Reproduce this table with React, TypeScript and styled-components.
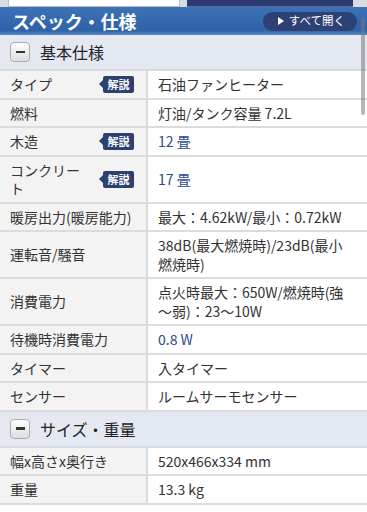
import React from "react";
import styled, { createGlobalStyle } from "styled-components";

const Global = createGlobalStyle`
  html, body { margin: 0; padding: 0; background: #fff; }
  body { font-family: "Noto Sans CJK JP", "Noto Sans", sans-serif; color: #333; }
  * { box-sizing: border-box; }
`;

const Page = styled.div`
  position: relative;
  width: 367px;
  height: 512px;
  overflow: hidden;
  background: #fff;
`;

const TopStrip = styled.div`
  display: flex;
  height: 7px;
  background: #d9dce2;
`;

const TabWhite = styled.div`
  margin-left: 8px;
  width: 172px;
  background: #fff;
  border: 1px solid #b8bcc4;
  border-top: none;
`;

const TabNavy = styled.div`
  margin-left: 7px;
  width: 166px;
  background: #2c3b6f;
  border-bottom: 1px solid #5a6a9a;
`;

const Header = styled.div`
  display: flex;
  align-items: center;
  justify-content: space-between;
  height: 28px;
  padding: 0 10px 0 12px;
  background: linear-gradient(#3d72b7, #2f62a8 85%, #5b8ccb);
`;

const Title = styled.div`
  color: #fff;
  font-size: 18px;
  font-weight: 700;
  letter-spacing: 0;
  line-height: 1;
`;

const OpenAll = styled.div`
  display: flex;
  align-items: center;
  gap: 5px;
  height: 19px;
  padding: 0 12px 0 15px;
  border-radius: 10px;
  background: #2d4174;
  color: #fff;
  font-size: 11.5px;
  line-height: 1;
`;

const Tri = styled.span`
  width: 0;
  height: 0;
  border-left: 6px solid #fff;
  border-top: 4px solid transparent;
  border-bottom: 4px solid transparent;
`;

const Section = styled.div`
  display: flex;
  align-items: center;
  gap: 10px;
  height: 36px;
  padding-left: 10px;
  background: #e4e8f0;
  border-bottom: 2px solid #d6dae2;
`;

const MinusBox = styled.div`
  display: flex;
  align-items: center;
  justify-content: center;
  width: 20px;
  height: 20px;
  border-radius: 4px;
  border: 1px solid #a9adb5;
  background: linear-gradient(#ffffff, #dcdde0);
  &::after {
    content: "";
    width: 9px;
    height: 2.5px;
    background: #333;
  }
`;

const SectionTitle = styled.div`
  font-size: 16px;
  color: #222;
`;

const Row = styled.div`
  display: flex;
  border-bottom: 2px solid #dcdcdc;
`;

const Label = styled.div`
  display: flex;
  align-items: center;
  gap: 10px;
  width: 148px;
  flex-shrink: 0;
  padding: 4px 12px 4px 10px;
  background: #f3f3f3;
  border-right: 2px solid #dcdcdc;
  font-size: 14px;
  line-height: 18.5px;
`;

const LabelText = styled.div`
  flex: 1;
  min-width: 0;
`;

const Badge = styled.div`
  position: relative;
  flex-shrink: 0;
  width: 31px;
  height: 17px;
  border-radius: 2px;
  background: #2c4170;
  color: #fff;
  font-size: 11px;
  font-weight: 700;
  line-height: 17px;
  text-align: center;
  &::before {
    content: "";
    position: absolute;
    left: -4px;
    top: 4.5px;
    border-right: 4px solid #2c4170;
    border-top: 4px solid transparent;
    border-bottom: 4px solid transparent;
  }
`;

const Value = styled.div<{ $link?: boolean }>`
  flex: 1;
  display: flex;
  align-items: center;
  padding: 4px 14px 4px 10px;
  font-size: 14px;
  line-height: 18.5px;
  color: ${(p) => (p.$link ? "#2b4a8c" : "#333")};
`;

const Scrollbar = styled.div`
  position: absolute;
  right: 2px;
  top: 17px;
  width: 4px;
  height: 98px;
  border-radius: 2px;
  background: rgba(120, 120, 120, 0.55);
`;

type Spec = { label: string; value: string; badge?: boolean; link?: boolean };

const basic: Spec[] = [
  { label: "タイプ", value: "石油ファンヒーター", badge: true },
  { label: "燃料", value: "灯油/タンク容量 7.2L" },
  { label: "木造", value: "12 畳", badge: true, link: true },
  { label: "コンクリート", value: "17 畳", badge: true, link: true },
  { label: "暖房出力(暖房能力)", value: "最大：4.62kW/最小：0.72kW" },
  { label: "運転音/騒音", value: "38dB(最大燃焼時)/23dB(最小燃焼時)" },
  { label: "消費電力", value: "点火時最大：650W/燃焼時(強～弱)：23～10W" },
  { label: "待機時消費電力", value: "0.8 W", link: true },
  { label: "タイマー", value: "入タイマー" },
  { label: "センサー", value: "ルームサーモセンサー" },
];

const size: Spec[] = [
  { label: "幅x高さx奥行き", value: "520x466x334 mm" },
  { label: "重量", value: "13.3 kg" },
];

const SpecRow = ({ s }: { s: Spec }) => (
  <Row>
    <Label>
      <LabelText>{s.label}</LabelText>
      {s.badge && <Badge>解説</Badge>}
    </Label>
    <Value $link={s.link}>{s.value}</Value>
  </Row>
);

export default function App() {
  return (
    <Page>
      <Global />
      <TopStrip>
        <TabWhite />
        <TabNavy />
      </TopStrip>
      <Header>
        <Title>スペック・仕様</Title>
        <OpenAll>
          <Tri />
          すべて開く
        </OpenAll>
      </Header>
      <Section>
        <MinusBox />
        <SectionTitle>基本仕様</SectionTitle>
      </Section>
      {basic.map((s) => (
        <SpecRow key={s.label} s={s} />
      ))}
      <Section>
        <MinusBox />
        <SectionTitle>サイズ・重量</SectionTitle>
      </Section>
      {size.map((s) => (
        <SpecRow key={s.label} s={s} />
      ))}
      <Scrollbar />
    </Page>
  );
}
